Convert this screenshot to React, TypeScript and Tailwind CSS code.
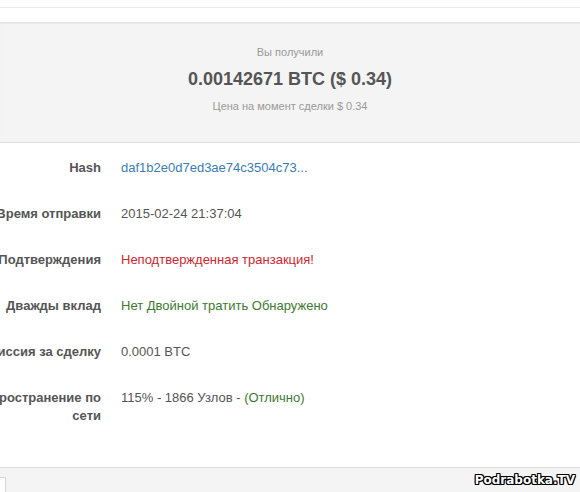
import React from "react";

const rows: { label: string; value: React.ReactNode }[] = [
  { label: "Hash", value: <span className="text-[#3a7db8]">daf1b2e0d7ed3ae74c3504c73...</span> },
  { label: "Время отправки", value: <span>2015-02-24 21:37:04</span> },
  { label: "Подтверждения", value: <span className="text-[#d0262e]">Неподтвержденная транзакция!</span> },
  { label: "Дважды вклад", value: <span className="text-[#3c7a2e]">Нет Двойной тратить Обнаружено</span> },
  { label: "Комиссия за сделку", value: <span>0.0001 BTC</span> },
  {
    label: "Распространение по сети",
    value: (
      <span>
        115% - 1866 Узлов - <span className="text-[#3c7a2e]">(Отлично)</span>
      </span>
    ),
  },
];

export default function App() {
  return (
    <div className="relative w-[580px] h-[492px] overflow-hidden bg-white flex flex-col font-['Liberation_Sans',Arial,sans-serif]">
      <div className="h-[7px] shrink-0 bg-white" />
      <div className="h-[15px] shrink-0 bg-white border-t border-[#e9e9e9]" />
      <div className="h-[121px] shrink-0 bg-[#f4f4f4] border-t border-[#e4e4e4] shadow-[inset_0_1px_1px_rgba(0,0,0,0.05)] border-b border-b-[#dedede] flex flex-col items-center pt-[21px]">
        <div className="text-[11px] leading-[16px] text-[#999]">Вы получили</div>
        <div className="mt-[7px] text-[18px] leading-[24px] font-bold text-[#555]">0.00142671 BTC ($ 0.34)</div>
        <div className="mt-[7px] text-[11px] leading-[16px] text-[#999]">Цена на момент сделки $ 0.34</div>
      </div>
      <div className="flex-1 flex flex-col pt-[2px]">
        {rows.map((r) => (
          <div key={r.label} className="flex py-[14px] text-[13px] leading-[18px]">
            <div className="-ml-[60px] w-[161px] shrink-0 text-right font-bold text-[#555]">{r.label}</div>
            <div className="pl-[20px] text-[#555]">{r.value}</div>
          </div>
        ))}
      </div>
      <div className="h-[25px] shrink-0 bg-[#f4f4f4] border-t border-[#dcdcdc] relative">
        <div className="absolute left-0 top-[9px] w-[6px] h-[20px] bg-white border border-l-0 border-[#d8d8d8]" />
      </div>
      <div className="absolute right-[5px] bottom-[4px] text-[12px] leading-[16px] font-bold text-white font-['DejaVu_Sans',Verdana,sans-serif] [text-shadow:1px_0_0_#000,-1px_0_0_#000,0_1px_0_#000,0_-1px_0_#000,1px_1px_0_#000,-1px_-1px_0_#000,1px_-1px_0_#000,-1px_1px_0_#000]">
        Podrabotka.TV
      </div>
    </div>
  );
}
